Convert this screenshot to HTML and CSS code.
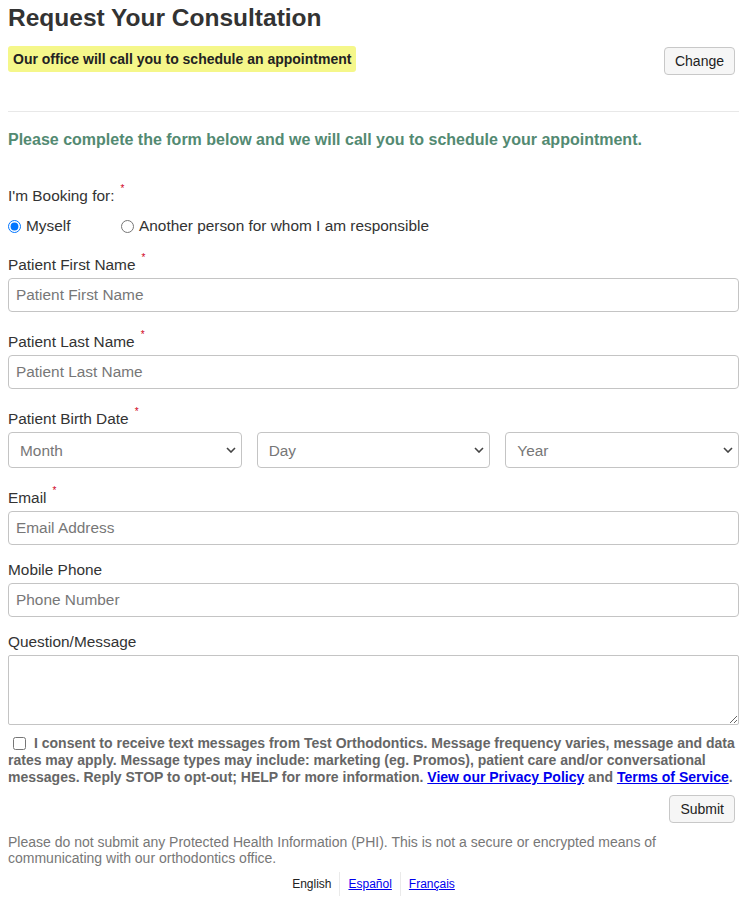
FILE: index.html
```html
<!DOCTYPE html>
<html lang="en">
<head>
<meta charset="utf-8">
<title>Request Your Consultation</title>
<link rel="stylesheet" href="styles.css">
</head>
<body>
<div class="page">
  <h1 class="title">Request Your Consultation</h1>
  <div class="mode-row">
    <span class="badge">Our office will call you to schedule an appointment</span>
    <button class="btn" type="button">Change</button>
  </div>
  <hr class="divider">
  <p class="intro">Please complete the form below and we will call you to schedule your appointment.</p>

  <form class="form">
    <div class="booking">
      <div class="label">I'm Booking for:<span class="req">*</span></div>
      <div class="radios">
        <label class="radio"><input type="radio" name="who" checked> Myself</label>
        <label class="radio"><input type="radio" name="who"> Another person for whom I am responsible</label>
      </div>
    </div>

    <div class="group g-wide">
      <div class="label">Patient First Name<span class="req">*</span></div>
      <input class="field" type="text" placeholder="Patient First Name">
    </div>
    <div class="group g-wide">
      <div class="label">Patient Last Name<span class="req">*</span></div>
      <input class="field" type="text" placeholder="Patient Last Name">
    </div>
    <div class="group g-wide">
      <div class="label">Patient Birth Date<span class="req">*</span></div>
      <div class="dates">
        <div class="select-wrap">
          <select class="select"><option>Month</option></select>
          <svg class="chev" viewBox="0 0 10 6" width="10" height="6"><path d="M1 1l4 4 4-4" fill="none" stroke="#444" stroke-width="1.6"/></svg>
        </div>
        <div class="select-wrap">
          <select class="select"><option>Day</option></select>
          <svg class="chev" viewBox="0 0 10 6" width="10" height="6"><path d="M1 1l4 4 4-4" fill="none" stroke="#444" stroke-width="1.6"/></svg>
        </div>
        <div class="select-wrap">
          <select class="select"><option>Year</option></select>
          <svg class="chev" viewBox="0 0 10 6" width="10" height="6"><path d="M1 1l4 4 4-4" fill="none" stroke="#444" stroke-width="1.6"/></svg>
        </div>
      </div>
    </div>
    <div class="group g-narrow">
      <div class="label">Email<span class="req">*</span></div>
      <input class="field" type="email" placeholder="Email Address">
    </div>
    <div class="group g-narrow">
      <div class="label">Mobile Phone</div>
      <input class="field" type="tel" placeholder="Phone Number">
    </div>
    <div class="group g-last">
      <div class="label">Question/Message</div>
      <textarea class="area"></textarea>
    </div>

    <p class="consent"><input class="check" type="checkbox">I consent to receive text messages from Test Orthodontics. Message frequency varies, message and data rates may apply. Message types may include: marketing (eg. Promos), patient care and/or conversational messages. Reply STOP to opt-out; HELP for more information. <a href="#">View our Privacy Policy</a> and <a href="#">Terms of Service</a>.</p>

    <div class="submit-row"><button class="btn" type="button">Submit</button></div>
  </form>

  <p class="phi">Please do not submit any Protected Health Information (PHI). This is not a secure or encrypted means of communicating with our orthodontics office.</p>

  <div class="langs">
    <span class="lang">English</span>
    <a class="lang" href="#">Español</a>
    <a class="lang" href="#">Français</a>
  </div>
</div>
</body>
</html>
```
FILE: styles.css
```css
* { box-sizing: border-box; }
html, body { margin: 0; padding: 0; background: #fff; }
body {
  font-family: "Liberation Sans", Arial, sans-serif;
  color: #333;
  font-size: 15px;
}
.page { padding: 4px 8px 0 8px; }

.title {
  margin: 0;
  font-size: 24.5px;
  line-height: 28px;
  font-weight: bold;
  color: #333;
}

.mode-row {
  margin-top: 14px;
  display: flex;
  justify-content: space-between;
  align-items: flex-start;
}
.badge {
  display: inline-block;
  background: #f5f78a;
  color: #222;
  font-weight: bold;
  font-size: 14px;
  line-height: 18px;
  padding: 4px 5px;
  border-radius: 3px;
}
.btn {
  font-family: "Liberation Sans", Arial, sans-serif;
  font-size: 14px;
  color: #222;
  background: #f6f6f6;
  border: 1px solid #c8c8c8;
  border-radius: 4px;
  height: 28px;
  padding: 0 10px;
  margin-right: 4px;
}
.mode-row .btn { margin-top: 1px; }

.divider {
  margin: 36px 0 0 0;
  border: 0;
  border-top: 1px solid #e8e8e8;
  height: 0;
}

.intro {
  margin: 18px 0 0 0;
  font-size: 16px;
  line-height: 20px;
  font-weight: bold;
  color: #538a72;
}

.form { margin-top: 36px; }

.label {
  font-size: 15.4px;
  line-height: 20px;
  color: #333;
  padding-top: 1px;
  margin-bottom: 3px;
}
.req {
  color: #d0021b;
  font-size: 10px;
  vertical-align: top;
  line-height: 10px;
  margin-left: 6px;
  position: relative;
  top: -2px;
}

.booking { margin-bottom: 18px; }
.booking .label { padding-top: 0; margin-bottom: 10px; }
.radios { display: flex; font-size: 15.4px; line-height: 20px; }
.radio { display: inline-flex; align-items: center; }
.radio input { margin: 0 5px 0 0; width: 13px; height: 13px; }
.radio:first-child { width: 113px; }

.group.g-wide { margin-bottom: 19px; }
.group.g-narrow { margin-bottom: 14px; }
.group.g-last { margin-bottom: 10px; }

.field {
  display: block;
  width: 100%;
  height: 34px;
  border: 1px solid #c4c4c4;
  border-radius: 4px;
  padding: 0 7px;
  font-family: "Liberation Sans", Arial, sans-serif;
  font-size: 15.4px;
  color: #333;
  background: #fff;
}
.field::placeholder { color: #777; }

.dates {
  display: grid;
  grid-template-columns: 1fr 1fr 1fr;
  gap: 15px;
}
.select-wrap { position: relative; }
.select {
  display: block;
  width: 100%;
  height: 36px;
  appearance: none;
  -webkit-appearance: none;
  border: 1px solid #c4c4c4;
  border-radius: 4px;
  background: #fff;
  padding: 0 11px;
  font-family: "Liberation Sans", Arial, sans-serif;
  font-size: 15.4px;
  color: #777;
}
.chev {
  position: absolute;
  right: 6px;
  top: 15px;
  pointer-events: none;
}

.area {
  display: block;
  width: 100%;
  height: 70px;
  border: 1px solid #c4c4c4;
  border-radius: 2px;
  font-family: "Liberation Sans", Arial, sans-serif;
  font-size: 15px;
  resize: vertical;
}

.consent {
  margin: 0;
  font-size: 14px;
  line-height: 17px;
  font-weight: bold;
  color: #666;
}
.check {
  width: 13px;
  height: 13px;
  margin: 0 8px 0 5px;
  vertical-align: -2px;
}
.consent a { color: #0000ee; text-decoration: underline; }

.submit-row {
  display: flex;
  justify-content: flex-end;
  margin-top: 9px;
}

.phi {
  margin: 11px 0 0 0;
  font-size: 14px;
  line-height: 16px;
  color: #777;
}

.langs {
  display: flex;
  justify-content: center;
  margin-top: 6px;
  font-size: 12px;
  line-height: 16px;
}
.lang {
  padding: 4px 8px;
  color: #222;
}
.lang + .lang { border-left: 1px solid #eaeaea; }
a.lang { color: #0000ee; text-decoration: underline; }
```
